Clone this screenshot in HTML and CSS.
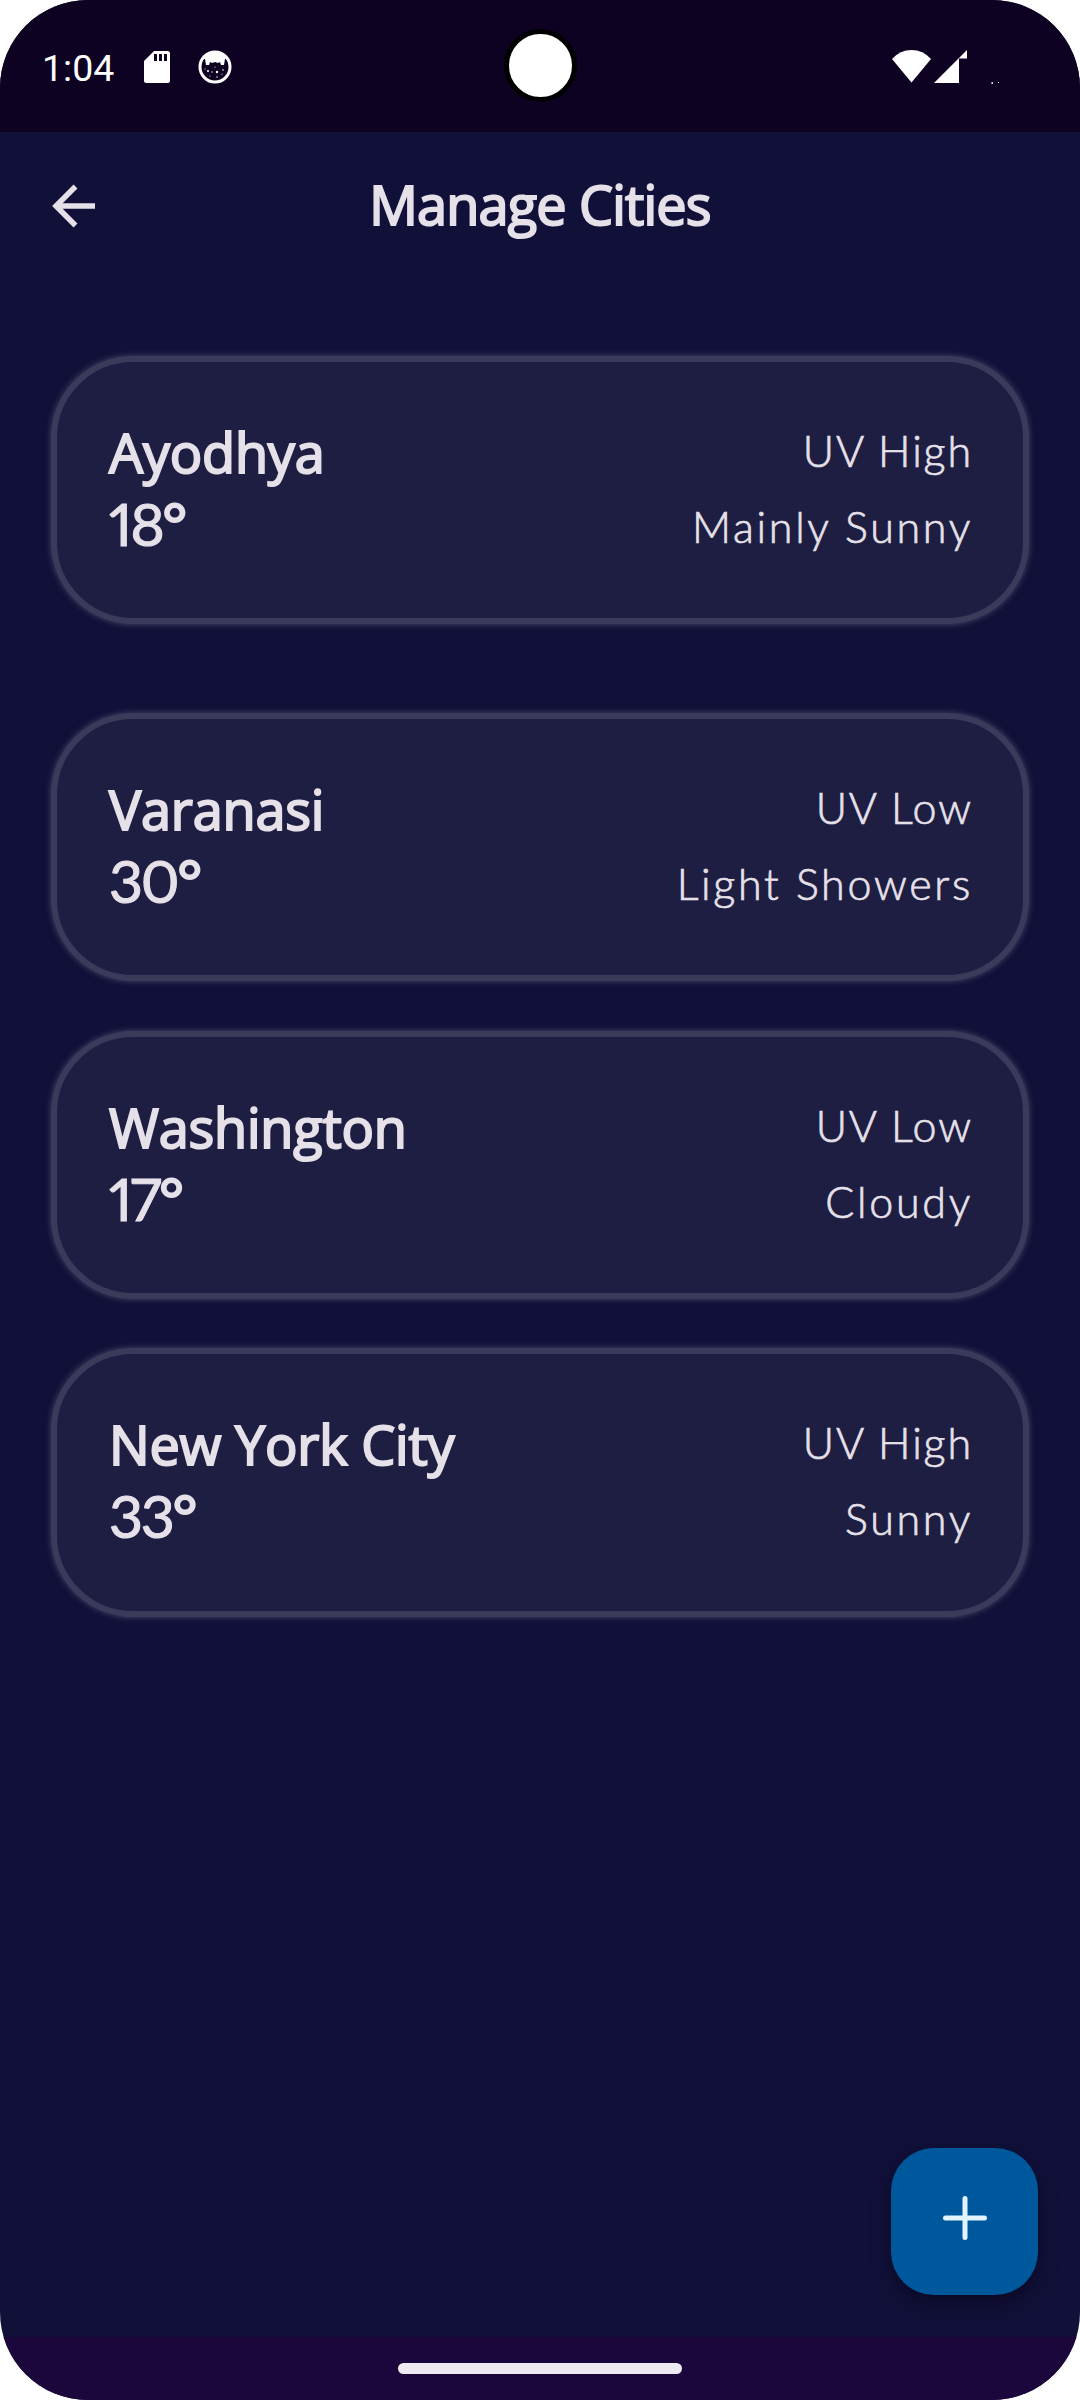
FILE: index.html
```html
<!DOCTYPE html>
<html lang="en">
<head>
<meta charset="utf-8">
<title>Manage Cities</title>
<link rel="stylesheet" href="styles.css">
</head>
<body>
<div class="screen">
  <header class="status">
    <span class="time">1:04</span>
    <svg class="sd" width="26" height="32" viewBox="0 0 26 32"><path fill="#fff" fill-rule="evenodd" d="M10 0H23.500Q26 0 26 2.500V29.500Q26 32 23.500 32H2.500Q0 32 0 29.500V10ZM10 3V10H13V3ZM15 3V10H18V3ZM20 3V10H23V3Z"/></svg>
    <svg class="cat" width="34" height="34" viewBox="0 0 34 34"><circle cx="17" cy="17" r="15" fill="none" stroke="#fff" stroke-width="3"/><path fill="#fff" d="M4 9Q9 1 17 1T30 9L27 9L26 15L23 15L22 12L20 13L17 12L14 13L12 12L11 15L8 15L7 9Z"/><g fill="#fff"><circle cx="10" cy="21" r="1.100"/><circle cx="19" cy="22" r="1.200"/><circle cx="25" cy="20" r=".8"/><circle cx="14" cy="22" r=".7"/><circle cx="17" cy="17" r=".6"/><circle cx="7" cy="19" r=".6"/><circle cx="12" cy="26" r=".6"/><circle cx="19" cy="27" r=".7"/><circle cx="24" cy="24" r=".6"/></g></svg>
    <div class="camera"></div>
    <svg class="signal" width="110" height="36" viewBox="890 48 110 36"><g fill="#fff"><path d="M892 58Q900 49 911.500 49T931 58L911.500 81.500Z"/><path d="M934 82L959 57V82Z"/><path d="M959 57L967 49V57.500H959Z"/><path d="M991.500 81h1.300v2h-1.300zM998 81h1v1h-1z"/></g></svg>
  </header>
  <div class="appbar">
    <svg class="back" width="44" height="44" viewBox="0 0 44 44" fill="none" stroke="#e6e1e9" stroke-width="5.500"><path d="M43 22H5M23.500 2.500L4 22L23.500 41.500"/></svg>
    <h1 class="title">Manage Cities</h1>
  </div>
  <main class="cities">
    <section class="card current">
      <div class="place"><div class="name">Ayodhya</div><div class="temp">18<span class="deg">°</span></div></div>
      <div class="info"><div class="uv">UV High</div><div class="sky">Mainly Sunny</div></div>
    </section>
    <section class="card">
      <div class="place"><div class="name">Varanasi</div><div class="temp">30<span class="deg">°</span></div></div>
      <div class="info"><div class="uv">UV Low</div><div class="sky">Light Showers</div></div>
    </section>
    <section class="card">
      <div class="place"><div class="name">Washington</div><div class="temp">17<span class="deg">°</span></div></div>
      <div class="info"><div class="uv">UV Low</div><div class="sky">Cloudy</div></div>
    </section>
    <section class="card">
      <div class="place"><div class="name">New York City</div><div class="temp">33<span class="deg">°</span></div></div>
      <div class="info"><div class="uv">UV High</div><div class="sky">Sunny</div></div>
    </section>
  </main>
  <button class="fab" aria-label="Add city"><svg width="46" height="46" viewBox="0 0 46 46" stroke="#e1f4ff" stroke-width="5" stroke-linecap="round"><path d="M23 3.500V42.500M3.500 23H42.500"/></svg></button>
  <footer class="nav"><div class="pill"></div></footer>
</div>
</body>
</html>
```
FILE: styles.css
```css
* { box-sizing: border-box; }
body { margin: 0; background: #fff; }
.screen {
  position: relative;
  display: flex;
  flex-direction: column;
  width: 1080px;
  height: 2400px;
  overflow: hidden;
  border-radius: 88px;
  background: #111039;
  color: #e6e1e9;
  font-family: "Open Sans", sans-serif;
}
.status {
  position: relative;
  display: flex;
  align-items: center;
  height: 132px;
  padding: 2px 80px 0 42px;
  background: #0d0221;
}
.time {
  width: 102px;
  padding-top: 2px;
  color: #fff;
  font: 400 37.500px/44px Roboto, sans-serif;
}
.cat { margin-left: 28px; }
.signal { margin-left: auto; }
.camera {
  position: absolute;
  left: 504px;
  top: 29px;
  width: 73px;
  height: 73px;
  border: 5px solid #000;
  border-radius: 50%;
  background: #fff;
}
.appbar {
  display: grid;
  grid-template-columns: 60px 1fr 60px;
  align-items: center;
  height: 148px;
  padding: 0 52px 1px;
}
.title {
  margin: -2px 0 0;
  text-align: center;
  font-size: 54px;
  font-weight: 400;
  line-height: 75px;
  letter-spacing: -.8px;
  -webkit-text-stroke: 2px #e6e1e9;
}
.cities {
  display: flex;
  flex: 1;
  flex-direction: column;
  gap: 49.250px;
  padding: 75.500px 51px 0;
}
.card {
  display: flex;
  justify-content: space-between;
  height: 268.500px;
  padding: 49px 50px 0 52px;
  border: 6px solid #3b3a5b;
  border-radius: 82px;
  background: #1e1e43;
  box-shadow: 0 0 6px #4a4968;
}
.current { margin-bottom: 39.500px; }
.name {
  font-size: 54px;
  line-height: 82px;
  letter-spacing: -.2px;
  -webkit-text-stroke: 2px #e6e1e9;
}
.temp {
  margin-top: -5px;
  font: 400 59px/72px Lato, sans-serif;
  font-variant-numeric: proportional-nums;
  letter-spacing: -2.200px;
  -webkit-text-stroke: 1px #e6e1e9;
}
.deg { -webkit-text-stroke-width: 2px; }
.info {
  padding-top: 2px;
  text-align: right;
  font: 300 43px/76px Lato, sans-serif;
  -webkit-text-stroke: .7px #e6e1e9;
}
.uv { letter-spacing: 1.900px; }
.sky { letter-spacing: 2.700px; }
.fab {
  position: absolute;
  left: 891px;
  top: 2148px;
  display: flex;
  justify-content: center;
  width: 147px;
  height: 147px;
  padding: 47px 0 0;
  border: 0;
  border-radius: 43px;
  background: #00589c;
  box-shadow: 0 12px 22px rgba(0, 0, 0, .25), 0 2px 6px rgba(0, 0, 0, .15);
}
.nav {
  display: flex;
  justify-content: center;
  height: 63px;
  padding-top: 26px;
  background: #1b073b;
}
.pill {
  width: 284px;
  height: 11px;
  border-radius: 5.500px;
  background: #edeaf1;
}
```
